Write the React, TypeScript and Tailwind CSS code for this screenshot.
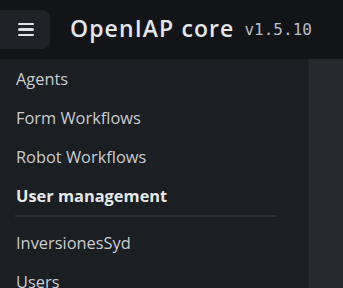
import React from 'react';

const items = ['Agents', 'Form Workflows', 'Robot Workflows'];

function App() {
    return (
        <div className="w-[343px] h-[288px] overflow-hidden flex flex-col bg-[#1b1e22] font-['Open_Sans',sans-serif]">
            {/* Header */}
            <header className="h-[59px] shrink-0 flex items-center bg-[#121418]">
                <button className="w-[50px] h-[39px] rounded-r-lg bg-[#1f2226] flex flex-col items-center justify-center gap-[3px] pl-[2px]">
                    <span className="block w-[16px] h-[2.5px] rounded-sm bg-[#dfe2e6]" />
                    <span className="block w-[16px] h-[2.5px] rounded-sm bg-[#dfe2e6]" />
                    <span className="block w-[16px] h-[2.5px] rounded-sm bg-[#dfe2e6]" />
                </button>
                <h1 className="ml-[20px] text-[23px] font-semibold text-[#e3e6ea] leading-none pb-[2px] tracking-[1.1px]">OpenIAP core</h1>
                <span className="ml-[10px] text-[16px] text-[#b9bec4] font-['DejaVu_Sans_Mono',monospace] leading-none">v1.5.10</span>
            </header>

            <div className="flex flex-1">
                {/* Sidebar */}
                <nav className="w-[308px] shrink-0 pt-[1px]">
                    <ul className="text-[16.4px] text-[#c9cdd2]">
                        {items.map((item) => (
                            <li key={item} className="h-[39px] flex items-center pl-[16px]">
                                {item}
                            </li>
                        ))}
                        <li className="h-[39px] flex items-center pl-[16px] font-bold text-[#e6e9ec]">User management</li>
                        <li className="mx-[15px] w-[262px] h-[2px] bg-[#2a2d31] mt-[-1px]" />
                        <li className="h-[52px] flex items-center pl-[16px]">InversionesSyd</li>
                        <li className="h-[26px] flex items-center pl-[16px]">Users</li>
                    </ul>
                </nav>
                <div className="flex-1 border-l border-[#202327] bg-[#27292e]" />
            </div>
        </div>
    );
}

export default App;
